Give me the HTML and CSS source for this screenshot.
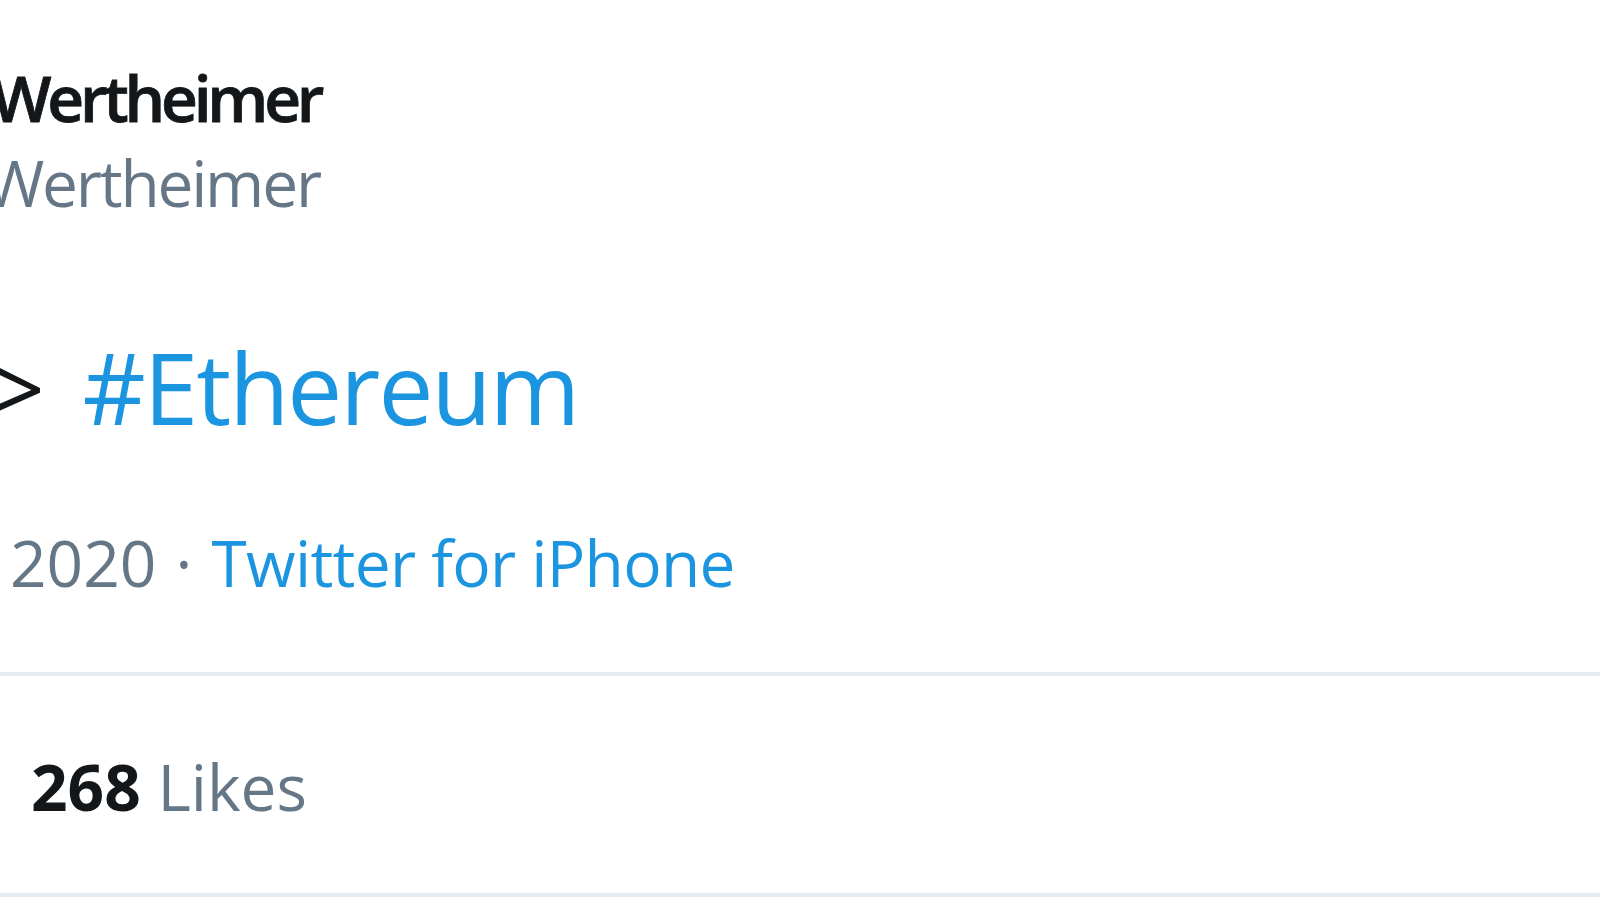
FILE: index.html
```html
<!DOCTYPE html>
<html>
<head>
<meta charset="utf-8">
<link rel="stylesheet" href="styles.css">
</head>
<body>
<main class="tweet">
  <header class="author">
    <div class="name">Wertheimer</div>
    <div class="handle">@Wertheimer</div>
  </header>
  <p class="text"><span class="gt">&gt;</span> <a class="tag">#Ethereum</a></p>
  <div class="meta"><span class="date">2020</span><span class="dot">·</span><a class="source">Twitter for iPhone</a></div>
  <div class="stats">
    <span class="count">268</span> <span class="label">Likes</span>
  </div>
</main>
</body>
</html>
```

FILE: styles.css
```css
html, body {
  margin: 0;
  padding: 0;
  background: #ffffff;
  overflow: hidden;
}
body {
  width: 1600px;
  height: 900px;
  font-family: "Open Sans", "Noto Sans", sans-serif;
}
.tweet {
  display: flex;
  flex-direction: column;
  padding-top: 55px;
}
.author {
  display: flex;
  flex-direction: column;
}
.name {
  font-size: 64px;
  line-height: 85px;
  font-weight: 600;
  letter-spacing: -4.2px;
  color: #14171a;
  margin-left: -9px;
  white-space: nowrap;
  -webkit-text-stroke: 0.8px #14171a;
}
.handle {
  font-size: 64px;
  line-height: 85px;
  letter-spacing: -2.2px;
  color: #657786;
  margin-left: -70px;
  white-space: nowrap;
}
.text {
  margin: 97px 0 0 -11px;
  font-size: 98px;
  line-height: 130px;
  letter-spacing: -2px;
  color: #14171a;
  white-space: nowrap;
}
.gt {
  margin-right: 16px;
}
.tag {
  color: #1b95e0;
}
.meta {
  margin-top: 68px;
  font-size: 64px;
  line-height: 85px;
  color: #657786;
  padding-left: 10px;
  white-space: nowrap;
}
.dot {
  margin: 0 0.3em;
}
.source {
  color: #1b95e0;
  letter-spacing: -0.7px;
}
.stats {
  margin-top: 67px;
  border-top: 4px solid #e6ecf0;
  border-bottom: 4px solid #e6ecf0;
  padding: 68px 0 64px 31px;
  font-size: 64px;
  line-height: 85px;
  white-space: nowrap;
}
.count {
  font-weight: 700;
  color: #14171a;
}
.label {
  color: #657786;
}
```
